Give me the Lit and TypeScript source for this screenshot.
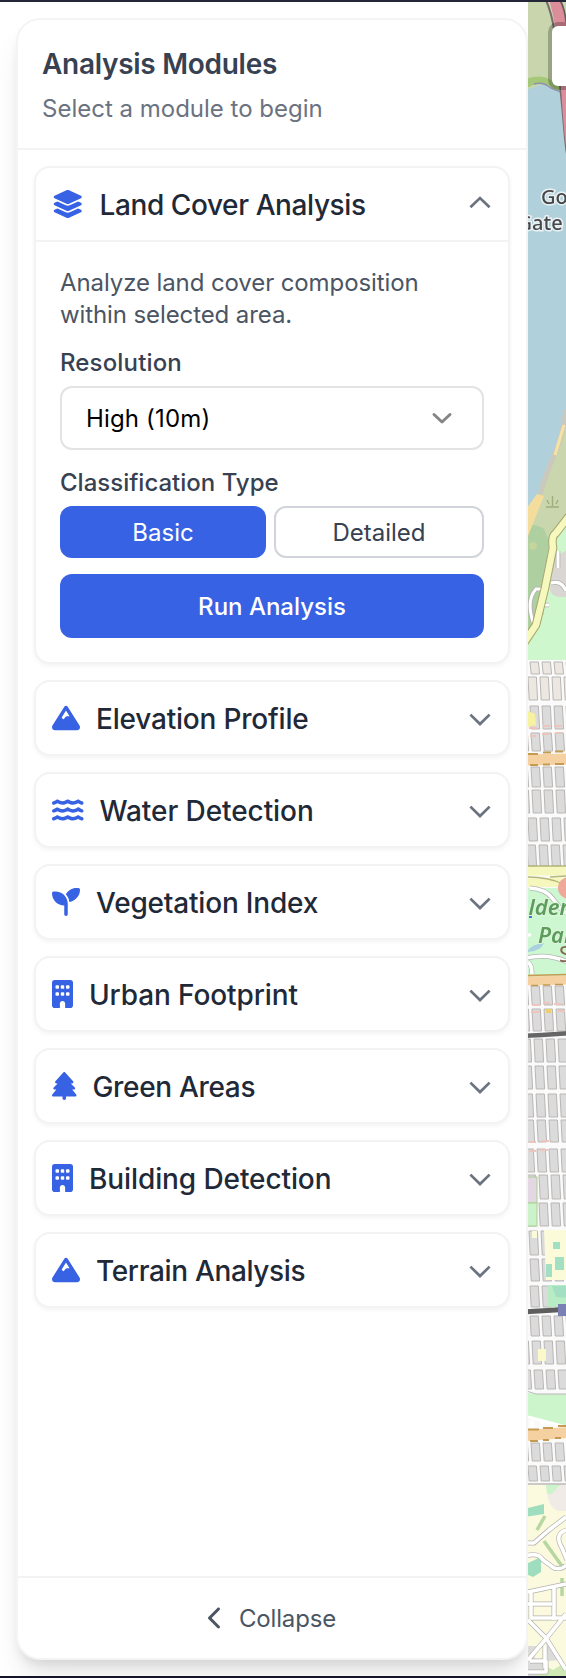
import { LitElement, html, svg, css } from "lit";
import { customElement, property } from "lit/decorators.js";
import { styleMap } from "lit/directives/style-map.js";

interface Glyph { w: number; body: unknown; }

const wave = "M269.5 69.9c11.1-7.9 25.9-7.9 37 0C329 85.4 356.5 96 384 96c26.9 0 55.4-10.8 77.4-26.1c11.9-8.5 28.1-7.8 39.2 1.7c14.4 11.9 32.5 21 50.6 25.2c17.2 4 27.9 21.2 23.9 38.4s-21.2 27.9-38.4 23.9c-24.5-5.7-44.9-16.5-58.2-25C449.5 149.7 417 160 384 160c-31.9 0-60.6-9.9-80.4-18.9c-5.8-2.7-11.1-5.3-15.6-7.7c-4.5 2.4-9.7 5.1-15.6 7.7c-19.8 9-48.5 18.9-80.4 18.9c-33 0-65.5-10.3-94.5-25.8c-13.4 8.4-33.7 19.3-58.2 25c-17.2 4-34.4-6.7-38.4-23.9s6.7-34.4 23.9-38.4C42.8 92.6 61 83.5 75.3 71.6c11.1-9.5 27.3-10.1 39.2-1.7C136.7 85.2 165.1 96 192 96c27.5 0 55-10.6 77.5-26.1z";

const glyphs: Record<string, Glyph> = {
  layers: { w: 576, body: svg`<path d="M264.5 5.2c14.9-6.9 32.1-6.9 47 0l218.6 101c8.5 3.9 13.9 12.4 13.9 21.8s-5.4 17.9-13.9 21.8l-218.6 101c-14.9 6.9-32.1 6.9-47 0L45.9 149.8C37.4 145.8 32 137.3 32 128s5.4-17.9 13.9-21.8L264.5 5.2zM476.9 209.6l53.2 24.6c8.5 3.9 13.9 12.4 13.9 21.8s-5.4 17.9-13.9 21.8l-218.6 101c-14.9 6.9-32.1 6.9-47 0L45.9 277.8C37.4 273.8 32 265.3 32 256s5.4-17.9 13.9-21.8l53.2-24.6 152 70.2c23.4 10.8 50.4 10.8 73.8 0l152-70.2zm-152 198.2l152-70.2 53.2 24.6c8.5 3.9 13.9 12.4 13.9 21.8s-5.4 17.9-13.9 21.8l-218.6 101c-14.9 6.9-32.1 6.9-47 0L45.9 405.8C37.4 401.8 32 393.3 32 384s5.4-17.9 13.9-21.8l53.2-24.6 152 70.2c23.4 10.8 50.4 10.8 73.8 0z"/>` },
  mountain: { w: 512, body: svg`<path fill-rule="evenodd" d="M256 32c12.5 0 24.1 6.4 30.8 17L503.4 394.4c5.6 8.9 8.6 19.2 8.6 29.7c0 30.9-25 55.9-55.9 55.9H55.9C25 480 0 455 0 424.1c0-10.5 3-20.8 8.6-29.7L225.2 49c6.6-10.6 18.3-17 30.8-17zm65 192L256 120.4 176.9 246.5l18.3 24.4c6.4 8.5 19.2 8.5 25.6 0l25.6-34.1c6-8.1 15.5-12.8 25.6-12.8h49z"/>` },
  water: { w: 576, body: svg`<path d=${wave}/><path d=${wave} transform="translate(0 144)"/><path d=${wave} transform="translate(0 288)"/>` },
  seedling: { w: 512, body: svg`<path d="M512 32c0 113.6-84.6 207.5-194.2 222c-7.1-53.4-30.6-101.6-65.3-139.3C290.8 46.3 364 0 448 0h32c17.7 0 32 14.3 32 32zM0 96C0 78.3 14.3 64 32 64H64c123.7 0 224 100.3 224 224v32V480c0 17.7-14.3 32-32 32s-32-14.3-32-32V320C100.3 320 0 219.7 0 96z"/>` },
  building: { w: 384, body: svg`<path fill-rule="evenodd" d="M48 0C21.5 0 0 21.5 0 48V464c0 26.5 21.5 48 48 48h96V432c0-26.5 21.5-48 48-48s48 21.5 48 48v80h96c26.5 0 48-21.5 48-48V48c0-26.5-21.5-48-48-48H48zM64 240c0-8.8 7.2-16 16-16h32c8.8 0 16 7.2 16 16v32c0 8.8-7.2 16-16 16H80c-8.8 0-16-7.2-16-16V240zm112-16h32c8.8 0 16 7.2 16 16v32c0 8.8-7.2 16-16 16H176c-8.8 0-16-7.2-16-16V240c0-8.8 7.2-16 16-16zm80 16c0-8.8 7.2-16 16-16h32c8.8 0 16 7.2 16 16v32c0 8.8-7.2 16-16 16H272c-8.8 0-16-7.2-16-16V240zM80 96h32c8.8 0 16 7.2 16 16v32c0 8.8-7.2 16-16 16H80c-8.8 0-16-7.2-16-16V112c0-8.8 7.2-16 16-16zm80 16c0-8.8 7.2-16 16-16h32c8.8 0 16 7.2 16 16v32c0 8.8-7.2 16-16 16H176c-8.8 0-16-7.2-16-16V112zM272 96h32c8.8 0 16 7.2 16 16v32c0 8.8-7.2 16-16 16H272c-8.8 0-16-7.2-16-16V112c0-8.8 7.2-16 16-16z"/>` },
  tree: { w: 448, body: svg`<path d="M210.6 5.9L62 169.4c-3.9 4.2-6 9.8-6 15.5C56 197.7 66.3 208 79.1 208H104L30.6 281.4c-4.2 4.2-6.6 10-6.6 16C24 309.9 34.1 320 46.6 320H80L5.4 409.5C1.9 413.7 0 419 0 424.5c0 13 10.5 23.5 23.5 23.5H192v32c0 17.7 14.3 32 32 32s32-14.3 32-32V448H424.5c13 0 23.5-10.5 23.5-23.5c0-5.5-1.9-10.8-5.4-15L368 320h33.4c12.5 0 22.6-10.1 22.6-22.6c0-6-2.4-11.8-6.6-16L344 208h24.9c12.7 0 23.1-10.3 23.1-23.1c0-5.7-2.1-11.3-6-15.5L237.4 5.9C234 2.1 229.1 0 224 0s-10 2.1-13.4 5.9z"/>` },
};

@customElement("module-header")
class ModuleHeader extends LitElement {
  @property() icon = "layers";
  @property() label = "";
  @property({ type: Number }) tracking = 0;
  @property({ type: Boolean }) open = false;

  static styles = css`
    :host { display: flex; align-items: center; height: 72px; padding: 0 16px; box-sizing: border-box; }
    .glyph { height: 28px; flex: none; fill: #3762e3; margin-right: 16px; display: block; }
    .label { flex: 1; padding-top: 1px; font-size: 28px; line-height: 40px; font-weight: 500; color: #1f2937; white-space: nowrap; }
    .chev { width: 24px; height: 24px; flex: none; fill: none; stroke: #6b7280; stroke-width: 2.7; }
  `;

  render() {
    const g = glyphs[this.icon];
    return html`
      <svg class="glyph" viewBox="0 0 ${g.w} 512" width=${(g.w * 28) / 512}>${g.body}</svg>
      <span class="label" style=${styleMap({ letterSpacing: `${this.tracking}px` })}>${this.label}</span>
      <svg class="chev" viewBox="0 0 24 24">
        ${this.open ? svg`<path d="M2.4 15.3L12 6.1l9.6 9.2"/>` : svg`<path d="M2.4 8.6L12 18l9.6-9.4"/>`}
      </svg>`;
  }
}

const blockRows: [number, number, number, string][] = [
  [662, 674, 2, "#ece7e0"], [677, 700, 0, "#ece7e0"], [706, 729, 2, "#dcdbdb"], [733, 751, 3, "#dcdbdb"],
  [767, 787, 3, "#dcdbdb"], [790, 813, 4, "#dcdbdb"], [818, 841, 0, "#dcdbdb"], [845, 866, -1, "#dcdbdb"],
  [986, 1005, 3, "#dcdbdb"], [1009, 1031, 4, "#dcdbdb"], [1039, 1062, 6, "#dcdbdb"], [1066, 1089, 7, "#dcdbdb"],
  [1094, 1117, 8, "#dcdbdb"], [1120, 1142, 9, "#dcdbdb"], [1149, 1172, 9, "#dcdbdb"], [1175, 1199, 11, "#dcdbdb"],
  [1203, 1226, 11, "#dcdbdb"], [1231, 1255, 1, "#dcdbdb"], [1259, 1281, 2, "#dcdbdb"], [1286, 1307, 2, "#dcdbdb"],
  [1316, 1336, 2, "#dcdbdb"], [1341, 1364, 4, "#dcdbdb"], [1370, 1389, 6, "#dcdbdb"], [1443, 1461, 3, "#dcdbdb"],
  [1466, 1481, 0, "#dcdbdb"],
];

const block = (x: number, y0: number, y1: number, fill: string) =>
  svg`<path d="M${x} ${y0}h8.400l1.200 ${y1 - y0}h-8.400z" fill=${fill} stroke="#b9b7b5" stroke-width="1"/>`;

const streets = "M526 1543h8l15-13 17-13M526 1556q12-4 17 4l11 8q8 2 12-3M566 1530q-12 4-4 18l5 12M528 1592l38-8M528 1604h24M554 1588v32M531 1592v26h36M528 1620l18 18 20 32M566 1614l-21 26-17 20M545 1646v22M530 1661h16v11h-18";

@customElement("map-strip")
class MapStrip extends LitElement {
  static styles = css`
    :host { display: block; position: relative; overflow: hidden; }
    .map { display: block; width: 38px; height: 1674px; }
    .soft { filter: blur(0.6px); }
    .place { font: 500 20px "Noto Sans", sans-serif; fill: #47484c; stroke: #e9f1f3; stroke-width: 3; paint-order: stroke; }
    .park { font: italic 600 22px "Noto Sans", sans-serif; fill: #5c9c5c; stroke: #dff5db; stroke-width: 2; paint-order: stroke; }
    .shop { font: 22px "Noto Sans", sans-serif; fill: #866650; }
    .control { position: absolute; left: 20px; top: 20px; width: 80px; height: 60px; background: #fff;
      border: 4px solid rgba(0, 0, 0, 0.24); background-clip: padding-box; border-radius: 10px; }
  `;

  render() {
    return html`
      <svg class="map" viewBox="528 2 38 1674">
        <g class="soft">
        <rect x="520" y="-6" width="54" height="1690" fill="#fbfafa"/>
        <rect x="520" y="-6" width="54" height="668" fill="#b0d1dc"/>
        <path d="M520-6h54v100c-18-1-20-8-30-9-9-1-10 6-24 3z" fill="#c9d6ad"/>
        <path d="M520 81c16-6 23-5 29-2s9 5 17 6v6c-13 0-13-6-22-7-9-2-10 2-24 6z" fill="#a5c878"/>
        <path d="M534 84q9-2 14 2t14 6" fill="none" stroke="#8f92a8" stroke-width="1.500"/>
        <path d="M546 0c11 26 10 52 14 86s4 50 7 68" fill="none" stroke="#776b70" stroke-width="2"/>
        <path d="M548-4h12c7 16 7 36 7 66v90c-8-50-4-110-19-156z" fill="#db8d9a"/>
        <path d="M560 0q5 9 6 22" fill="none" stroke="#625b5c" stroke-width="1.6"/>

        <path d="M574 400l-15 40-17 48-22 68v118h54z" fill="#c9d6ae"/>
        <path d="M520 529q12-8 24 0l5 12-5 40-24 80z" fill="#aecfa0"/>
        <path d="M550 541l24-26v145h-54v-14l21-32z" fill="#cef7cd"/>
        <path d="M566 410q-3 25-11 43t-15 41" fill="none" stroke="#cbc8bd" stroke-width="5"/>
        <path d="M564 425l-9 30" fill="none" stroke="#f5e2a4" stroke-width="3"/>
        <path d="M537 494l7 2-20 50v-34z" fill="#f4dd9c"/>
        <circle cx="533" cy="546" r="4" fill="#c5d39d"/>
        <path d="M553 558l21-12v49q-21 6-24-5z" fill="#d9d6d3"/>
        <path d="M533 622q-7-22 3-33h7M551 583q11-3 15 8M558 551v17M549 605h-8v10" fill="none" stroke="#b3b0b0" stroke-width="4.6"/>
        <path d="M533 622q-7-22 3-33h7M551 583q11-3 15 8M558 551v17M549 605h-8v10" fill="none" stroke="#fff" stroke-width="3"/>
        <path d="M570 515l-14 18q-5 3-3 15l-8 40-9 37-12 18" fill="none" stroke="#a6a76d" stroke-width="8.600"/>
        <path d="M570 515l-14 18q-5 3-3 15l-8 40-9 37-12 18" fill="none" stroke="#f6f8bd" stroke-width="6.600"/>
        <path d="M546 507h13M552.500 506v-10M549 504l-2-4M556 504l2-4" fill="none" stroke="#9fac7b" stroke-width="1.4"/>
        <rect x="520" y="660" width="54" height="228" fill="#fbfafa"/>

        ${blockRows.map(([y0, y1, off, fill]) => [-12, 0, 12, 24, 36].map((x) => block(528 + off + x, y0, y1, fill)))}
        <path d="M528 711l7 3 1 11-8 2z" fill="#f7f2a0"/>
        <path d="M529 728h8M543 726h7M554 726h8M530 736h6M542 734h8M555 733h7M532 1005h8M543 1003h7M554 1004h8M531 1012h9M558 1011h7M529 1142h7M541 1141h8M529 1151h7M540 1150h8" stroke="#efc4bc" stroke-width="2"/>
        <path d="M546 1011h5" stroke="#edcf73" stroke-width="4"/>
        <path d="M520 760l54-1" stroke="#f5d1a1" stroke-width="11"/>
        <path d="M528 754h10M543 752.500h8M555 751.500h8M530 765h8M543 764.500h7M555 764h9" stroke="#c59b52" stroke-width="2"/>

        <rect x="520" y="888" width="54" height="90" fill="#cdf7d0"/>
        <path d="M520 871h54M520 883l54-1" stroke="#f6f7bd" stroke-width="9"/>
        <path d="M528 866h38M550 877l16-1M528 877q20 0 35 7" stroke="#b4b77b" fill="none" stroke-width="1.3"/>
        <circle cx="569" cy="888" r="11" fill="#f0a898"/>
        <path d="M530 888q16 1 23 11t13 14M526 958q22-5 42 4M532 974q0-9-4-12" fill="none" stroke="#b3b6b3" stroke-width="5"/>
        <path d="M530 888q16 1 23 11t13 14M526 958q22-5 42 4M532 974q0-9-4-12" fill="none" stroke="#fff" stroke-width="3.600"/>
        <path d="M528 950q5-6 16-7-3 8-16 9z" fill="#a9d1df"/>
        <path d="M528 935h3" stroke="#fff" stroke-width="3"/>
        <rect x="529" y="915" width="3" height="3" fill="#4b73dd"/>
        <path d="M520 981l54-1" stroke="#f5d1a1" stroke-width="9"/>
        <path d="M528 975.500l38-1M531 985.500h7M543 985h7M555 984.500h8" stroke="#c59b52" stroke-width="1.6"/>
        <path d="M520 1036l22-1 30-2" fill="none" stroke="#666" stroke-width="4.500"/>

        <rect x="526" y="1177" width="11" height="26" fill="#e2d7e2" stroke="#a9cf92"/>
        <rect x="526" y="1203" width="11" height="23" fill="#cbf2cb" stroke="#a9cf92"/>
        <path d="M544 1230h30v50h-28zM532 1231h5v7h-5z" fill="#fcfbd9"/>
        <path d="M553 1242h7v7h-7zM555 1257h9v13h-9zM546 1264h6v13h-6z" fill="#a3dfc2"/>
        <path d="M548 1285h26v22h-26z" fill="#b7ecc4"/><path d="M552 1286h22v12l-18-1z" fill="#a3dfc2"/>
        <path d="M538 1349h8v12h-8z" fill="#fbf9c9"/>
        <path d="M520 1312l54-3" stroke="#5e5e5e" stroke-width="5"/>
        <rect x="558" y="1304" width="14" height="12" fill="#7a7fb4"/>

        <path d="M520 1392l16 2h38v35l-54-12z" fill="#cdf5cb"/>
        <path d="M520 1389l16 5h38" fill="none" stroke="#bab9b7" stroke-width="1"/>
        <path d="M528 1417l38 10M532 1420v9M542 1422v7" fill="none" stroke="#fff" stroke-width="3"/>
        <path d="M520 1436l54-4" stroke="#f5d1a1" stroke-width="11"/>
        <path d="M528 1429.500h11M543 1428h10M558 1426h8M530 1441h8M543 1440h6M555 1438h6" stroke="#c59b52" stroke-width="1.8"/>

        <rect x="520" y="1485" width="54" height="199" fill="#fbfade"/>
        <path d="M549 1485q17-3 25 4v22h-16q-14-7-9-26z" fill="#f0ebe6"/>
        <path d="M546 1485h14l-8 9h-5z" fill="#cdf3cd"/>
        <path d="M524 1509l20-5v10l-20 3zM524 1565l17-8v15l-8 5-9-4z" fill="#9eddbd"/>
        <path d="M544 1541l20 28M562 1578v18M537 1530l8-14" stroke="#b7d7a0" stroke-width="3.500"/>
        <path d="M524 1646h14l-4 14h-10zM546 1642l14 18-12 1zM524 1661h20v23h-20z" fill="#dcdbdb"/>
        <path d="M538 1672l8-6 7 4 8-5 6 4v15h-29z" fill="#cfe9b4"/>
        <g fill="none" stroke-linejoin="round">
          <path d=${streets} stroke="#b3b2b0" stroke-width="5"/>
          <path d=${streets} stroke="#fff" stroke-width="3.600"/>
        </g>
        <path d="M520 1484h54" stroke="#bab9b7" stroke-width="1.4"/>
        <text class="place" x="541" y="203.500">Golden</text>
        <text class="place" x="517.500" y="230">Gate</text>
        <text class="park" x="528.500" y="914.500">lden</text>
        <text class="park" x="538" y="943">Park</text>
        <text class="shop" x="559" y="962">S</text>
        </g>
      </svg>
      <div class="control"></div>`;
  }
}

const modules: [string, string, number][] = [
  ["mountain", "Elevation Profile", -0.2], ["water", "Water Detection", -0.08], ["seedling", "Vegetation Index", -0.19],
  ["building", "Urban Footprint", -0.11], ["tree", "Green Areas", -0.33], ["building", "Building Detection", -0.1],
  ["mountain", "Terrain Analysis", -0.35],
];

@customElement("app-root")
class AppRoot extends LitElement {
  static styles = css`
    :host { display: flex; flex-direction: column; width: 566px; height: 1678px; box-sizing: border-box; overflow: hidden;
      border-top: 2px solid #26263a; border-bottom: 2px solid #14142b; background: #fff;
      font-family: Inter, "Liberation Sans", sans-serif; color: #374151; font-size: 24px; line-height: 32px; }
    .stage { flex: 1; display: flex; min-height: 0; }
    .side { width: 528px; box-sizing: border-box; padding: 16px 0 16px 16px; overflow: hidden; display: flex; }
    .panel { flex: 1; display: flex; flex-direction: column; box-sizing: border-box; border: 2px solid #f3f4f4; border-radius: 24px;
      background: #fff; box-shadow: 0 20px 30px -6px rgba(0, 0, 0, 0.1), 0 8px 12px -4px rgba(0, 0, 0, 0.1); }
    .head { height: 130px; box-sizing: border-box; border-bottom: 2px solid #f2f3f4; padding: 24px; }
    .title { margin: 0; font-size: 28px; line-height: 40px; font-weight: 600; letter-spacing: -0.28px; }
    .sub { margin: 9px 0 0; color: #6b7280; }
    .list { flex: 1; display: flex; flex-direction: column; gap: 16px; padding: 16px; }
    .card { border: 2px solid #f2f3f4; border-radius: 16px; background: #fff; box-shadow: 0 2px 4px rgba(0, 0, 0, 0.05); }
    .body { border-top: 2px solid #f2f3f4; padding: 25px 24px 24px; display: flex; flex-direction: column; }
    .desc { margin: 0 0 16px; color: #4b5563; letter-spacing: -0.1px; }
    .field { font-weight: 500; }
    .resolution { letter-spacing: 0.15px; }
    .select { height: 64px; box-sizing: border-box; margin: 7px 0 17px; border: 2px solid #e2e3e3; border-radius: 12px;
      display: flex; align-items: center; justify-content: space-between; padding: 0 28px 0 24px; color: #000; }
    .value { padding-top: 2px; letter-spacing: 0.16px; }
    .arrow { width: 24px; height: 24px; fill: none; stroke: #858585; stroke-width: 3; stroke-linecap: round; stroke-linejoin: round; }
    .choices { display: flex; gap: 8px; margin: 7px 0 16px; }
    .choice { flex: 1; height: 52px; box-sizing: border-box; border-radius: 12px; display: flex; align-items: center; justify-content: center; padding-top: 2px; }
    .on { background: #3762e3; color: #fff; max-width: 206px; }
    .off { border: 2px solid #d1d5db; }
    .run { height: 64px; box-sizing: border-box; padding-top: 2px; border-radius: 12px; background: #3762e3; color: #fff; font-weight: 500;
      display: flex; align-items: center; justify-content: center; }
    .foot { height: 82px; box-sizing: border-box; border-top: 2px solid #f2f3f4; display: flex; align-items: center; justify-content: center; gap: 16px; color: #4b5563; }
    .back { width: 15px; height: 24px; fill: #4b5563; }
    .collapse { padding-top: 2px; letter-spacing: -0.15px; }
    .map { width: 38px; }
  `;

  render() {
    return html`
      <div class="stage">
        <div class="side">
          <section class="panel">
            <header class="head">
              <h2 class="title">Analysis Modules</h2>
              <p class="sub">Select a module to begin</p>
            </header>
            <div class="list">
              <article class="card">
                <module-header icon="layers" label="Land Cover Analysis" tracking="-0.4" open></module-header>
                <div class="body">
                  <p class="desc">Analyze land cover composition<br>within selected area.</p>
                  <div class="field resolution">Resolution</div>
                  <div class="select"><span class="value">High (10m)</span>
                    <svg class="arrow" viewBox="0 0 24 24"><path d="M4 8.500l8 7.500 8-7.500"/></svg>
                  </div>
                  <div class="field">Classification Type</div>
                  <div class="choices"><div class="choice on">Basic</div><div class="choice off">Detailed</div></div>
                  <div class="run">Run Analysis</div>
                </div>
              </article>
              ${modules.map(([icon, label, tracking]) => html`<article class="card"><module-header icon=${icon} label=${label} tracking=${tracking}></module-header></article>`)}
            </div>
            <footer class="foot">
              <svg class="back" viewBox="0 0 320 512"><path d="M9.400 233.400c-12.500 12.500-12.500 32.800 0 45.300l192 192c12.500 12.500 32.800 12.500 45.300 0s12.500-32.800 0-45.300L77.300 256 246.600 86.600c12.500-12.500 12.500-32.800 0-45.300s-32.800-12.500-45.300 0l-192 192z"/></svg>
              <span class="collapse">Collapse</span>
            </footer>
          </section>
        </div>
        <map-strip class="map"></map-strip>
      </div>`;
  }
}
